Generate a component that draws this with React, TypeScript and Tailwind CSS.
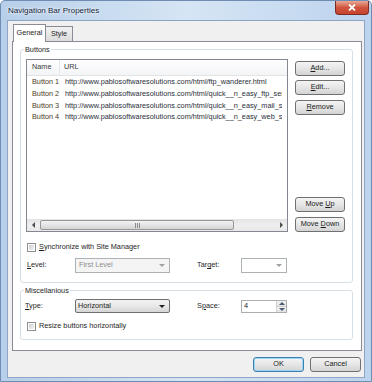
import React from 'react';

const rows = [
  { name: 'Button 1', url: 'http://www.pablosoftwaresolutions.com/html/ftp_wanderer.html' },
  { name: 'Button 2', url: 'http://www.pablosoftwaresolutions.com/html/quick__n_easy_ftp_server.html' },
  { name: 'Button 3', url: 'http://www.pablosoftwaresolutions.com/html/quick__n_easy_mail_server.html' },
  { name: 'Button 4', url: 'http://www.pablosoftwaresolutions.com/html/quick__n_easy_web_server.html' },
];

function Btn({
  children,
  focused = false,
  className = '',
}: {
  children: React.ReactNode;
  focused?: boolean;
  className?: string;
}) {
  return (
    <div
      className={`h-[15px] flex items-center justify-center rounded-[3px] border ${
        focused ? 'border-[#3c7fb1] shadow-[inset_0_0_0_1px_#9fd5f4]' : 'border-[#707070]'
      } bg-gradient-to-b from-[#f4f4f4] via-[#e6e6e6] to-[#d3d3d3] text-[#1b1b1b] ${className}`}
    >
      <span className="whitespace-pre">{children}</span>
    </div>
  );
}

function Arrow({ dir, color = '#4d4d4d' }: { dir: 'down' | 'up' | 'left' | 'right'; color?: string }) {
  const pts = {
    down: '0,0 6,0 3,3',
    up: '0,3 6,3 3,0',
    left: '3,0 3,6 0,3',
    right: '0,0 0,6 3,3',
  }[dir];
  const w = dir === 'down' || dir === 'up' ? 6 : 3;
  const h = dir === 'down' || dir === 'up' ? 3 : 6;
  return (
    <svg width={w} height={h} viewBox={`0 0 ${w} ${h}`}>
      <polygon points={pts} fill={color} />
    </svg>
  );
}

function Check({ label }: { label: React.ReactNode }) {
  return (
    <div className="flex items-center h-[10px] pl-[1px]">
      <div className="w-[9px] h-[9px] border border-[#8e8f8f] bg-white p-[1px]">
        <div className="w-full h-full bg-gradient-to-br from-[#cbcfd5] to-[#f4f4f4]" />
      </div>
      <span className="ml-[3px]">{label}</span>
    </div>
  );
}

function Group({ title, className = '', children }: { title: string; className?: string; children: React.ReactNode }) {
  return (
    <div className={`relative ml-[7px] w-[333px] border border-[#d5dfe5] rounded-[3px] ${className}`}>
      <span className="absolute left-[3px] -top-[5px] px-[1px] bg-white leading-[9px] text-[#1e1e1e]">{title}</span>
      {children}
    </div>
  );
}

function TitleBar() {
  return (
    <div className="h-[19px] flex items-start justify-between">
      <span className="mt-[5px] ml-[7px] text-[8px] leading-[10px] text-[#10243c] [text-shadow:0_0_4px_#ffffff,0_0_2px_#ffffff]">
        Navigation Bar Properties
      </span>
      <div className="mr-[2px] w-[34px] h-[14px] rounded-b-[4px] border border-t-0 border-[#7a2d22] bg-gradient-to-b from-[#e7a898] via-[#d0553e] to-[#c8432c] flex items-center justify-center">
        <svg width="8" height="7" viewBox="0 0 8 7">
          <path d="M1 0.5 L7 6.5 M7 0.5 L1 6.5" stroke="#ffffff" strokeWidth="1.8" />
        </svg>
      </div>
    </div>
  );
}

function ListView() {
  return (
    <div className="w-[262px] h-[173px] border border-[#828790] bg-white flex flex-col">
      <div className="h-[16px] flex items-center border-b border-[#e2e3e5] bg-gradient-to-b from-white to-[#f3f4f6] text-[#3a3a3a]">
        <div className="w-[33px] h-full flex items-center pl-[5px] border-r border-[#e3e6ea]">Name</div>
        <div className="pl-[4px]">URL</div>
      </div>
      <div className="flex-1 pt-[1px] overflow-hidden">
        {rows.map((r) => (
          <div key={r.name} className="h-[11.7px] flex items-center whitespace-nowrap">
            <div className="w-[33px] pl-[5px] text-[#4a3d25] shrink-0">{r.name}</div>
            <div className="pl-[5px] w-[222px] overflow-hidden text-[#2a2f3a]">{r.url}</div>
          </div>
        ))}
      </div>
      <div className="h-[12px] flex items-center bg-gradient-to-b from-[#e3e3e3] via-[#efefef] to-[#e8e8e8]">
        <div className="w-[13px] flex items-center justify-center">
          <Arrow dir="left" />
        </div>
        <div className="w-[194px] h-[10px] rounded-[2px] border border-[#979797] bg-gradient-to-b from-[#f3f3f3] via-[#e4e4e4] to-[#d4d4d4] flex items-center justify-center gap-[1px]">
          <div className="w-[1px] h-[5px] bg-[#8a8a8a]" />
          <div className="w-[1px] h-[5px] bg-[#8a8a8a]" />
          <div className="w-[1px] h-[5px] bg-[#8a8a8a]" />
        </div>
        <div className="flex-1" />
        <div className="w-[12px] flex items-center justify-center">
          <Arrow dir="right" />
        </div>
      </div>
    </div>
  );
}

export default function App() {
  return (
    <div className="w-[372px] h-[382px] overflow-hidden [font-family:'Liberation_Sans',Arial,sans-serif] text-[7.3px] text-[#1e1e1e]">
      <div className="w-full h-full flex flex-col border border-[#6f8db3] rounded-t-[5px] bg-gradient-to-r from-[#b7cfea] via-[#d6e5f4] to-[#bcd3ee]">
        <TitleBar />
        <div className="ml-[6px] w-[358px] h-[358px] border border-[#8ea6c4] bg-[#f0f0f0] flex flex-col pl-[4px] pr-[3px]">
          {/* tabs */}
          <div className="h-[20px] flex items-end pl-[1px]">
            <div className="relative z-10 -mb-[1px] h-[18px] w-[33px] border border-b-0 border-[#898c95] bg-white flex items-center justify-center pb-[1px]">
              General
            </div>
            <div className="h-[15px] w-[27px] border border-b-0 border-l-0 border-[#898c95] bg-gradient-to-b from-[#f2f2f2] to-[#dcdcdc] flex items-center justify-center">
              Style
            </div>
          </div>

          {/* tab panel */}
          <div className="h-[310px] w-[350px] border border-[#898c95] bg-white flex flex-col">
            <Group title="Buttons" className="mt-[7px] h-[234px]">
              <div className="pl-[5px] pt-[9px] flex flex-col">
                <div className="flex gap-[7px]">
                  <ListView />
                  <div className="w-[50px] flex flex-col pt-[2px]">
                    <Btn><span className="underline">A</span>dd...</Btn>
                    <Btn className="mt-[4px]"><span className="underline">E</span>dit...</Btn>
                    <Btn className="mt-[5px]"><span className="underline">R</span>emove</Btn>
                    <div className="flex-1" />
                    <Btn>Move <span className="underline">U</span>p</Btn>
                    <Btn className="mt-[5px]">Move <span className="underline">D</span>own</Btn>
                  </div>
                </div>
                <div className="mt-[10px]">
                  <Check label={<><span className="underline">S</span>ynchronize with Site Manager</>} />
                </div>
                <div className="mt-[6px] flex items-center h-[15px]">
                  <div className="w-[49px] pl-[1px]"><span className="underline">L</span>evel:</div>
                  <div className="w-[95px] h-[15px] border border-[#adb2b5] bg-[#f4f4f4] flex items-center justify-between pl-[3px] pr-[4px] text-[#8d8d8d]">
                    <span>First Level</span>
                    <Arrow dir="down" color="#a0a0a0" />
                  </div>
                  <div className="ml-[27px] w-[44px]">Tar<span className="underline">g</span>et:</div>
                  <div className="w-[46px] h-[15px] border border-[#adb2b5] bg-white flex items-center justify-end pr-[4px]">
                    <Arrow dir="down" color="#a0a0a0" />
                  </div>
                </div>
              </div>
            </Group>

            <Group title="Miscellanious" className="mt-[7px] h-[50px]">
              <div className="pl-[4px] pt-[8px] flex flex-col">
                <div className="flex items-center h-[14px]">
                  <div className="w-[50px]"><span className="underline">T</span>ype:</div>
                  <div className="w-[95px] h-[14px] rounded-[2px] border border-[#707070] bg-gradient-to-b from-[#f3f3f3] via-[#e8e8e8] to-[#d6d6d6] flex items-center justify-between pl-[2px] pr-[4px]">
                    <span>Horizontal</span>
                    <Arrow dir="down" color="#202020" />
                  </div>
                  <div className="ml-[27px] w-[44px]">S<span className="underline">p</span>ace:</div>
                  <div className="w-[46px] h-[13px] border border-[#abadb3] bg-white flex items-center justify-between pl-[2px]">
                    <span>4</span>
                    <div className="w-[10px] h-full flex flex-col border-l border-[#d0d0d0]">
                      <div className="flex-1 flex items-center justify-center bg-gradient-to-b from-[#f4f4f4] to-[#e2e2e2] border-b border-[#d0d0d0]">
                        <Arrow dir="up" color="#4a5a70" />
                      </div>
                      <div className="flex-1 flex items-center justify-center bg-gradient-to-b from-[#f4f4f4] to-[#e2e2e2]">
                        <Arrow dir="down" color="#4a5a70" />
                      </div>
                    </div>
                  </div>
                </div>
                <div className="mt-[8px] pl-[1px]">
                  <Check label="Resize buttons horizontally" />
                </div>
              </div>
            </Group>
          </div>

          {/* dialog buttons */}
          <div className="mt-[6px] flex justify-end gap-[6px]">
            <Btn focused className="w-[51px]">OK</Btn>
            <Btn className="w-[51px]">Cancel</Btn>
          </div>
        </div>
      </div>
    </div>
  );
}
